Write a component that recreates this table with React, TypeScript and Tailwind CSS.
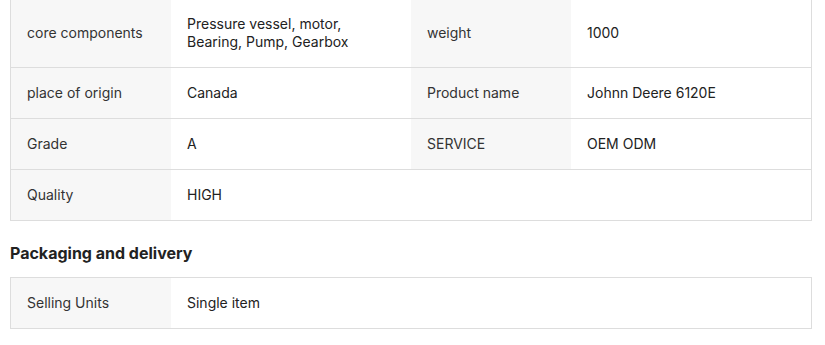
import React from "react";

const rows: [string, string, string?, string?][] = [
  ["core components", "Pressure vessel, motor,\nBearing, Pump, Gearbox", "weight", "1000"],
  ["place of origin", "Canada", "Product name", "Johnn Deere 6120E"],
  ["Grade", "A", "SERVICE", "OEM ODM"],
  ["Quality", "HIGH"],
];

function Label({ text }: { text?: string }) {
  return (
    <div className="w-[160px] shrink-0 bg-[#f7f7f7] px-4 py-4 flex items-center text-[14px] leading-[18px] text-[#333]">
      {text}
    </div>
  );
}
function Value({ text }: { text?: string }) {
  return (
    <div className="w-[240px] shrink-0 bg-white px-4 py-4 flex items-center text-[14px] leading-[18px] text-[#222] font-normal whitespace-pre-line">
      {text}
    </div>
  );
}

export default function App() {
  return (
    <div className="w-[825px] h-[345px] overflow-hidden bg-white font-['Inter','Liberation_Sans',sans-serif] pl-[10px]">
      <div className="-mt-px w-[802px] border-x border-b border-[#dddddd]">
        {rows.map((r, i) => (
          <div key={i} className={`flex ${i < rows.length - 1 ? "border-b border-[#dddddd]" : ""}`}>
            <Label text={r[0]} />
            <Value text={r[1]} />
            {r[2] !== undefined ? (
              <>
                <Label text={r[2]} />
                <Value text={r[3]} />
              </>
            ) : (
              <div className="flex-1 bg-white" />
            )}
          </div>
        ))}
      </div>
      <h2 className="mt-[20px] mb-[12px] text-[16px] leading-[24px] font-bold text-[#222]">
        Packaging and delivery
      </h2>
      <div className="w-[802px] border border-[#dddddd] flex">
        <Label text="Selling Units" />
        <Value text="Single item" />
        <div className="flex-1 bg-white" />
      </div>
    </div>
  );
}
